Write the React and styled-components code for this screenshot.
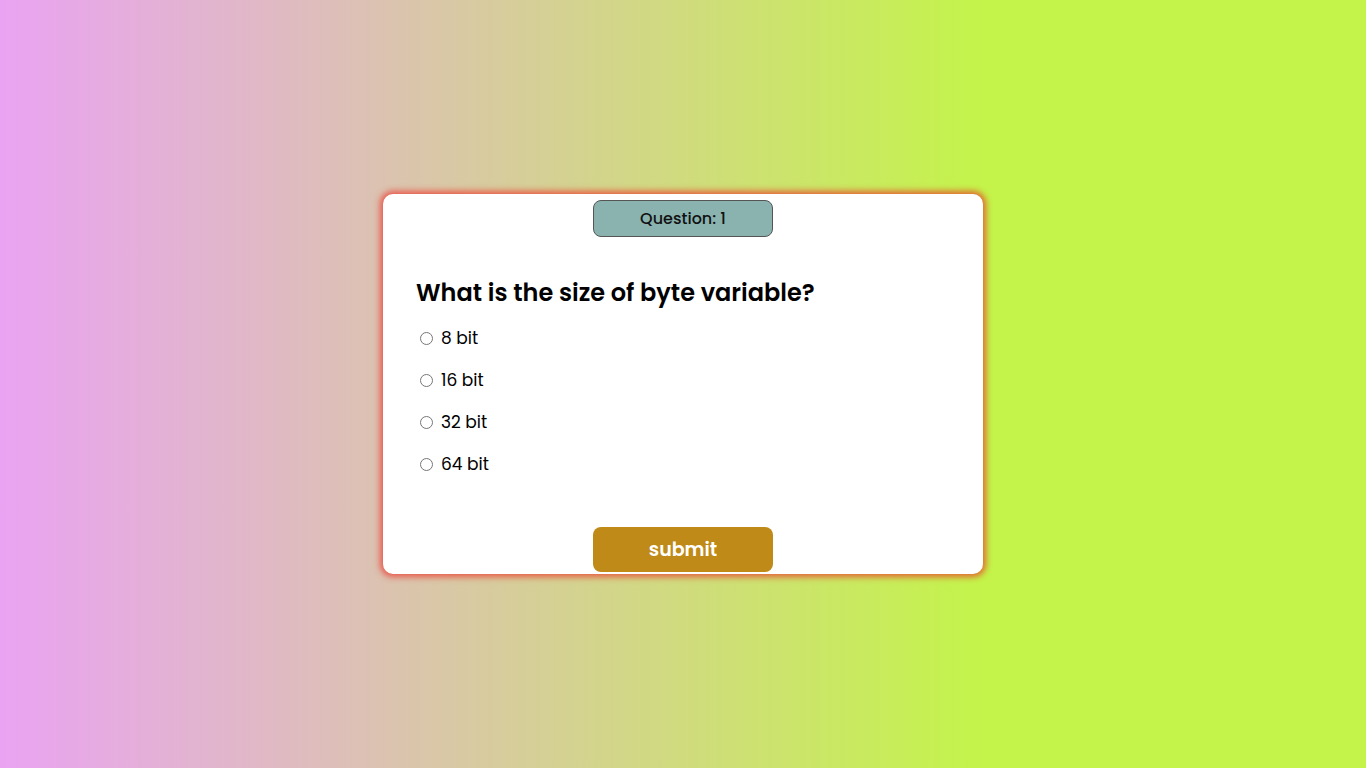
import React from "react";
import styled, { createGlobalStyle } from "styled-components";

const Global = createGlobalStyle`
  html, body { margin: 0; padding: 0; height: 100%; }
  body {
    font-family: "Poppins", "Open Sans", "Noto Sans", sans-serif;
    background: linear-gradient(90deg, #eaa3f2 0%, #c4f44a 72%, #c4f44a 100%);
  }
  #root { min-height: 100vh; }
`;

const Page = styled.div`
  width: 100vw;
  height: 100vh;
  display: flex;
  align-items: center;
  justify-content: center;
`;

const Card = styled.div`
  width: 600px;
  height: 380px;
  box-sizing: border-box;
  background: #fff;
  border-radius: 10px;
  box-shadow: 0 0 6px 3px rgba(240, 45, 35, 0.7);
  display: flex;
  flex-direction: column;
  align-items: center;
  padding: 6px 0 3px;
`;

const Badge = styled.div`
  width: 180px;
  height: 37px;
  box-sizing: border-box;
  background: #8ab3b0;
  border: 1px solid #555;
  border-radius: 8px;
  display: flex;
  align-items: center;
  justify-content: center;
  font-size: 16px;
  font-weight: 500;
  color: #111;
`;

const Body = styled.div`
  align-self: stretch;
  padding: 38px 33px 0;
`;

const Question = styled.h2`
  margin: 0 0 6px;
  font-size: 24px;
  font-weight: 600;
  line-height: 36px;
  color: #000;
`;

const OptionList = styled.div`
  display: flex;
  flex-direction: column;
`;

const Option = styled.label`
  display: flex;
  align-items: center;
  height: 42px;
  font-size: 17px;
  color: #000;
  padding-left: 3px;
`;

const Radio = styled.input.attrs({ type: "radio" })`
  width: 13px;
  height: 13px;
  margin: 0 8px 0 1px;
`;

const Submit = styled.button`
  margin-top: auto;
  margin-bottom: -1px;
  width: 180px;
  height: 45px;
  border: none;
  border-radius: 8px;
  background: #bf8a18;
  color: #fff;
  font-family: inherit;
  font-size: 19px;
  font-weight: 600;
  cursor: pointer;
`;

const options = ["8 bit", "16 bit", "32 bit", "64 bit"];

export default function App() {
  return (
    <>
      <Global />
      <Page>
        <Card>
          <Badge>Question: 1</Badge>
          <Body>
            <Question>What is the size of byte variable?</Question>
            <OptionList>
              {options.map((o) => (
                <Option key={o}>
                  <Radio name="answer" value={o} />
                  {o}
                </Option>
              ))}
            </OptionList>
          </Body>
          <Submit>submit</Submit>
        </Card>
      </Page>
    </>
  );
}
